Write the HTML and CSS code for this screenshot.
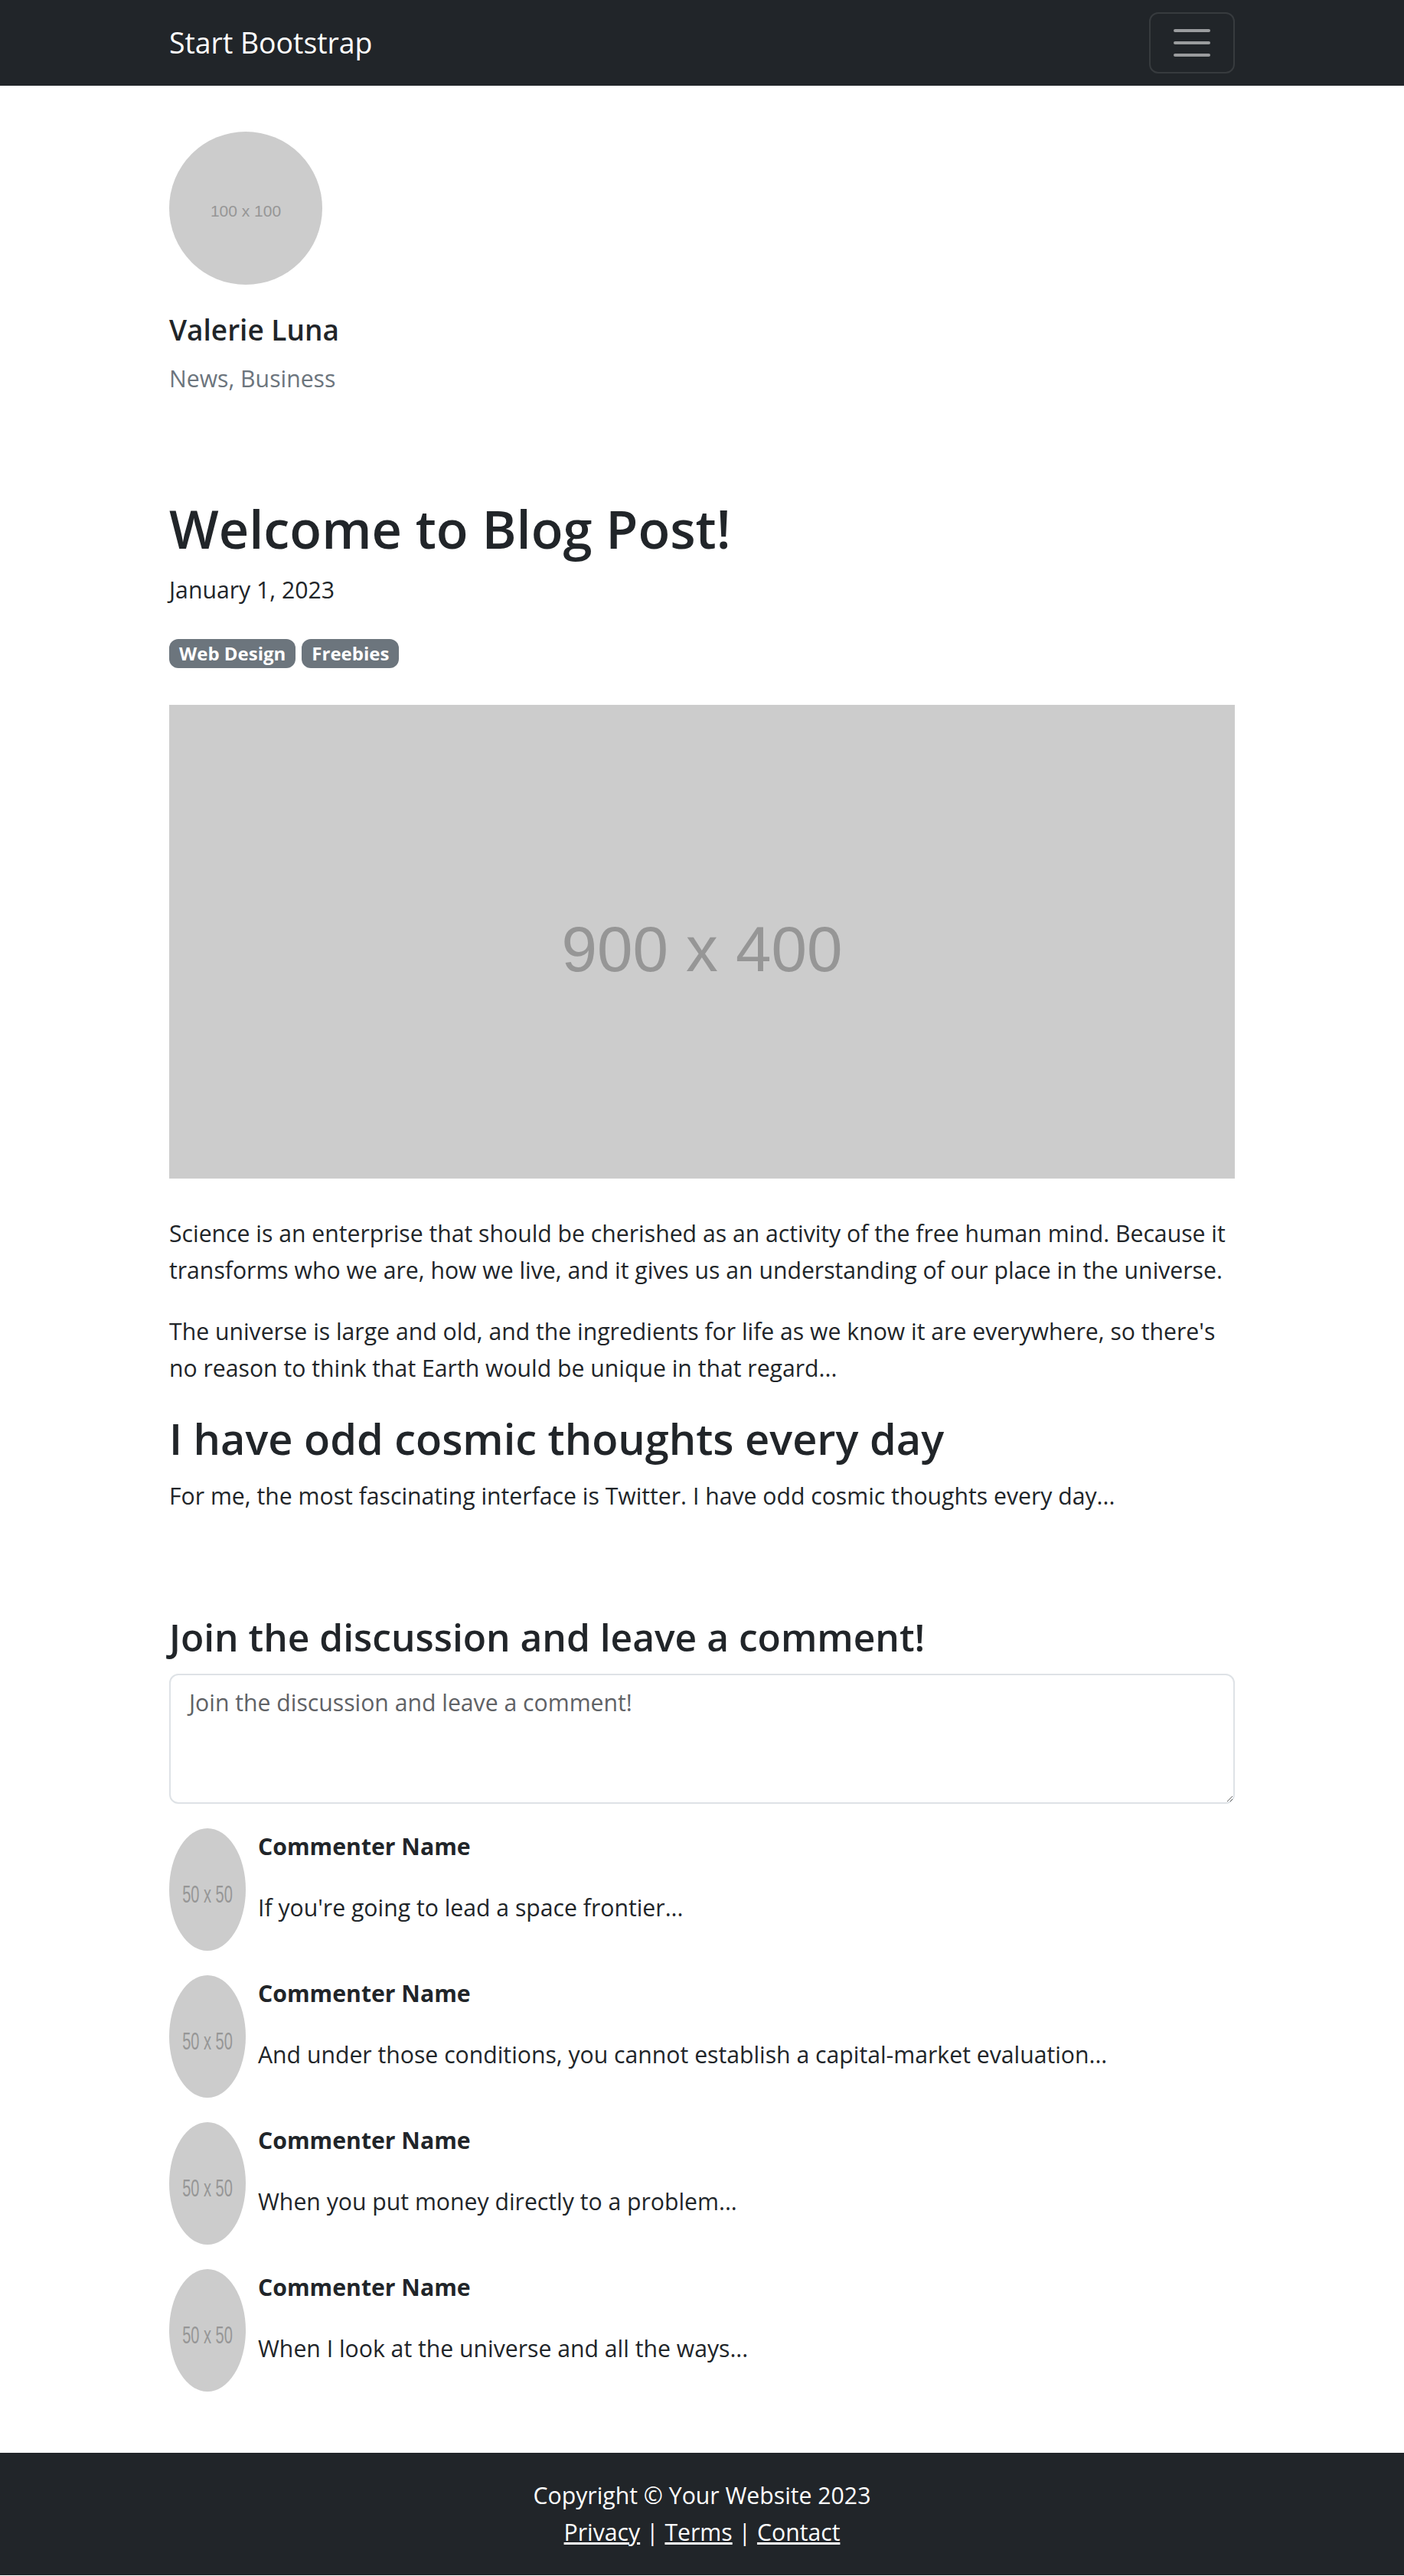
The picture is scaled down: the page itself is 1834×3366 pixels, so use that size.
FILE: index.html
```html
<!DOCTYPE html>
<html lang="en">
<head>
<meta charset="utf-8">
<title>Blog Post - Start Bootstrap</title>
<link rel="stylesheet" href="styles.css">
</head>
<body>
<nav class="navbar">
  <div class="container nav-inner">
    <a class="brand" href="#">Start Bootstrap</a>
    <button class="toggler" type="button" aria-label="Toggle navigation">
      <svg class="toggler-icon" viewBox="0 0 30 30" width="60" height="60" aria-hidden="true">
        <path d="M4 7h22M4 15h22M4 23h22" stroke="rgba(255,255,255,0.55)" stroke-width="2" stroke-linecap="round" stroke-miterlimit="10" fill="none"/>
      </svg>
    </button>
  </div>
</nav>

<main class="container page">
  <section class="author">
    <div class="author-avatar">
      <svg viewBox="0 0 100 100" width="200" height="200">
        <rect width="100" height="100" fill="#cccccc"/>
        <text x="50" y="55.5" text-anchor="middle" class="ph-text" font-size="10.5">100 x 100</text>
      </svg>
    </div>
    <h5 class="author-name">Valerie Luna</h5>
    <p class="author-tags">News, Business</p>
  </section>

  <article class="post">
    <header class="post-header">
      <h1 class="post-title">Welcome to Blog Post!</h1>
      <div class="post-date">January 1, 2023</div>
      <div class="badges">
        <a class="badge" href="#">Web Design</a>
        <a class="badge" href="#">Freebies</a>
      </div>
    </header>
    <figure class="post-figure">
      <svg viewBox="0 0 900 400" class="post-image" preserveAspectRatio="none">
        <rect width="900" height="400" fill="#cccccc"/>
        <text x="450" y="225" text-anchor="middle" class="ph-text" font-size="54">900 x 400</text>
      </svg>
    </figure>
    <section class="post-body">
      <p>Science is an enterprise that should be cherished as an activity of the free human mind. Because it transforms who we are, how we live, and it gives us an understanding of our place in the universe.</p>
      <p>The universe is large and old, and the ingredients for life as we know it are everywhere, so there's no reason to think that Earth would be unique in that regard...</p>
      <h2 class="post-subtitle">I have odd cosmic thoughts every day</h2>
      <p>For me, the most fascinating interface is Twitter. I have odd cosmic thoughts every day...</p>
    </section>
  </article>

  <section class="comments">
    <h3 class="comments-title">Join the discussion and leave a comment!</h3>
    <form class="comment-form">
      <textarea class="comment-input" rows="3" placeholder="Join the discussion and leave a comment!"></textarea>
    </form>

    <div class="comment">
      <div class="comment-avatar">
        <svg viewBox="0 0 50 50" preserveAspectRatio="none"><rect width="50" height="50" fill="#cccccc"/><text x="25" y="30.3" text-anchor="middle" class="ph-text" font-size="10">50 x 50</text></svg>
      </div>
      <div class="comment-body">
        <div class="comment-name">Commenter Name</div>
        <p class="comment-text">If you're going to lead a space frontier...</p>
      </div>
    </div>

    <div class="comment">
      <div class="comment-avatar">
        <svg viewBox="0 0 50 50" preserveAspectRatio="none"><rect width="50" height="50" fill="#cccccc"/><text x="25" y="30.3" text-anchor="middle" class="ph-text" font-size="10">50 x 50</text></svg>
      </div>
      <div class="comment-body">
        <div class="comment-name">Commenter Name</div>
        <p class="comment-text">And under those conditions, you cannot establish a capital-market evaluation...</p>
      </div>
    </div>

    <div class="comment">
      <div class="comment-avatar">
        <svg viewBox="0 0 50 50" preserveAspectRatio="none"><rect width="50" height="50" fill="#cccccc"/><text x="25" y="30.3" text-anchor="middle" class="ph-text" font-size="10">50 x 50</text></svg>
      </div>
      <div class="comment-body">
        <div class="comment-name">Commenter Name</div>
        <p class="comment-text">When you put money directly to a problem...</p>
      </div>
    </div>

    <div class="comment">
      <div class="comment-avatar">
        <svg viewBox="0 0 50 50" preserveAspectRatio="none"><rect width="50" height="50" fill="#cccccc"/><text x="25" y="30.3" text-anchor="middle" class="ph-text" font-size="10">50 x 50</text></svg>
      </div>
      <div class="comment-body">
        <div class="comment-name">Commenter Name</div>
        <p class="comment-text">When I look at the universe and all the ways...</p>
      </div>
    </div>
  </section>
</main>

<footer class="footer">
  <p class="copyright">Copyright &copy; Your Website 2023</p>
  <p class="footer-links"><a href="#">Privacy</a> | <a href="#">Terms</a> | <a href="#">Contact</a></p>
</footer>
</body>
</html>
```

FILE: styles.css
```css
* {
  box-sizing: border-box;
}

html, body {
  margin: 0;
  padding: 0;
}

body {
  font-family: "Open Sans", "Noto Sans", "Liberation Sans", sans-serif;
  font-size: 30.2px;
  line-height: 48px;
  color: #212529;
  background: #ffffff;
}

.container {
  width: 1392px;
  margin: 0 auto;
}

/* Navbar */
.navbar {
  background: #212529;
  height: 112px;
}

.nav-inner {
  height: 100%;
  display: flex;
  align-items: center;
  justify-content: space-between;
}

.brand {
  color: #ffffff;
  text-decoration: none;
  font-size: 37.4px;
  line-height: 60px;
}

.toggler {
  width: 112px;
  height: 80px;
  padding: 8px 24px;
  background: transparent;
  border: 2px solid rgba(255, 255, 255, 0.1);
  border-radius: 12px;
  display: flex;
  align-items: center;
  justify-content: center;
}

.toggler-icon {
  display: block;
  width: 60px;
  height: 60px;
}

/* Author */
.page {
  padding-top: 60px;
  padding-bottom: 48px;
}

.author-avatar {
  width: 200px;
  height: 200px;
  border-radius: 50%;
  overflow: hidden;
}

.author-avatar svg {
  display: block;
}

.ph-text {
  fill: #969696;
  font-family: "Liberation Sans", Arial, sans-serif;
}

.author-name {
  margin: 35px 0 16px;
  font-size: 37px;
  line-height: 48px;
  font-weight: 600;
}

.author-tags {
  margin: 0;
  color: #6c757d;
}

/* Post */
.post {
  margin-top: 129px;
}

.post-header {
  margin-bottom: 48px;
}

.post-title {
  margin: 0 0 13px;
  font-size: 68.5px;
  line-height: 86px;
  font-weight: 600;
}

.post-date {
  line-height: 48px;
}

.badges {
  margin-top: 40px;
  display: flex;
  gap: 8px;
}

.badge {
  display: inline-block;
  background: #6c757d;
  color: #ffffff;
  font-size: 24px;
  font-weight: 700;
  line-height: 24px;
  padding: 7px 13px;
  border-radius: 12px;
  text-decoration: none;
}

.post-figure {
  margin: 0 0 48px;
}

.post-image {
  display: block;
  width: 100%;
  height: 619px;
}

.post-body p {
  margin: 0 0 32px;
}

.post-subtitle {
  margin: 0 0 16px;
  font-size: 55.9px;
  line-height: 71px;
  font-weight: 600;
}

/* Comments */
.comments {
  margin-top: 129px;
}

.comments-title {
  margin: 0 0 16px;
  font-size: 49.7px;
  line-height: 63px;
  font-weight: 600;
}

.comment-form {
  margin: 0 0 32px;
}

.comment-input {
  display: block;
  width: 100%;
  height: 170px;
  padding: 12px 24px;
  border: 2px solid #dee2e6;
  border-radius: 12px;
  font: inherit;
  color: #212529;
  resize: vertical;
}

.comment-input::placeholder {
  color: #5f6266;
}

.comment {
  display: flex;
  margin-bottom: 32px;
}

.comment-avatar {
  width: 100px;
  flex-shrink: 0;
  border-radius: 50%;
  overflow: hidden;
}

.comment-avatar svg {
  display: block;
  width: 100%;
  height: 100%;
}

.comment-body {
  margin-left: 16px;
}

.comment-name {
  font-weight: 700;
  line-height: 48px;
}

.comment-text {
  margin: 32px 0 32px;
}

/* Footer */
.footer {
  background: #212529;
  color: #ffffff;
  text-align: center;
  padding: 32px 0;
}

.footer p {
  margin: 0;
}

.footer a {
  color: #ffffff;
  text-decoration: underline;
}
```
